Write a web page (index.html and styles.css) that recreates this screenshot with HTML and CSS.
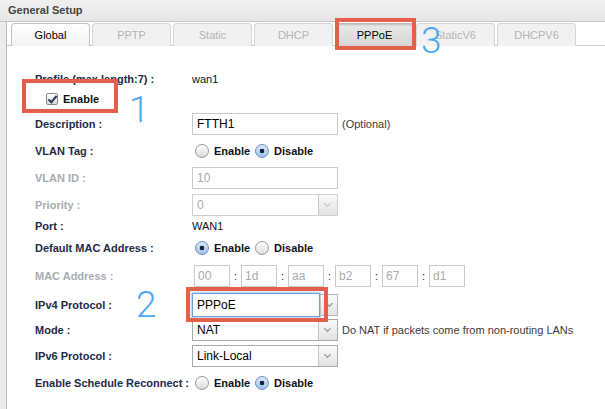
FILE: index.html
```html
<!DOCTYPE html>
<html>
<head>
    <meta charset="UTF-8">
    <title>General Setup</title>
    <link rel="stylesheet" href="styles.css">
</head>
<body>
    <div class="setup-title">General Setup</div>
    <div class="panel">
        <ul class="tabs">
            <li class="tab active">Global</li>
            <li class="tab">PPTP</li>
            <li class="tab">Static</li>
            <li class="tab">DHCP</li>
            <li class="tab pressed">PPPoE</li>
            <li class="tab">StaticV6</li>
            <li class="tab">DHCPV6</li>
        </ul>

        <div class="form">
            <div class="row r-profile">
                <span class="label">Profile (max length:7) :</span>
                <span class="value">wan1</span>
            </div>
            <div class="row r-enable">
                <span class="checkbox checked"></span>
                <span class="opt-text">Enable</span>
            </div>
            <div class="row r-field">
                <span class="label">Description :</span>
                <input class="text" type="text" value="FTTH1">
                <span class="hint">(Optional)</span>
            </div>
            <div class="row r-radio">
                <span class="label">VLAN Tag :</span>
                <span class="radio"></span><span class="opt-text">Enable</span>
                <span class="radio checked"></span><span class="opt-text">Disable</span>
            </div>
            <div class="row r-field">
                <span class="label off">VLAN ID :</span>
                <input class="text off" type="text" value="10">
            </div>
            <div class="row r-select">
                <span class="label off">Priority :</span>
                <div class="select off"><span class="sel-value">0</span><span class="arrow"></span></div>
            </div>
            <div class="row r-select">
                <span class="label">Port :</span>
                <span class="value">WAN1</span>
            </div>
            <div class="row r-mac">
                <span class="label">Default MAC Address :</span>
                <span class="radio checked"></span><span class="opt-text">Enable</span>
                <span class="radio"></span><span class="opt-text">Disable</span>
            </div>
            <div class="row r-macaddr">
                <span class="label off">MAC Address :</span>
                <div class="mac">
                    <input class="text off byte" type="text" value="00"><span class="colon">:</span>
                    <input class="text off byte" type="text" value="1d"><span class="colon">:</span>
                    <input class="text off byte" type="text" value="aa"><span class="colon">:</span>
                    <input class="text off byte" type="text" value="b2"><span class="colon">:</span>
                    <input class="text off byte" type="text" value="67"><span class="colon">:</span>
                    <input class="text off byte" type="text" value="d1">
                </div>
            </div>
            <div class="row r-ipv4">
                <span class="label">IPv4 Protocol :</span>
                <div class="select combo"><span class="combo-input">PPPoE</span><span class="arrow"></span></div>
            </div>
            <div class="row r-mode">
                <span class="label">Mode :</span>
                <div class="select"><span class="sel-value">NAT</span><span class="arrow"></span></div>
                <span class="hint">Do NAT if packets come from non-routing LANs</span>
            </div>
            <div class="row r-ipv6">
                <span class="label">IPv6 Protocol :</span>
                <div class="select"><span class="sel-value">Link-Local</span><span class="arrow"></span></div>
            </div>
            <div class="row r-sched">
                <span class="label">Enable Schedule Reconnect :</span>
                <span class="radio"></span><span class="opt-text">Enable</span>
                <span class="radio checked"></span><span class="opt-text">Disable</span>
            </div>
        </div>
    </div>

    <!-- anotaciones -->
    <div class="mark mark-tab"></div>
    <div class="mark mark-enable"></div>
    <div class="mark mark-ipv4"></div>
    <div class="step step-1">1</div>
    <div class="step step-2">2</div>
    <div class="step step-3">3</div>
</body>
</html>
```

FILE: styles.css
```css
body, html {
    margin: 0;
    padding: 0;
    font-family: "Liberation Sans", Arial, sans-serif;
    font-size: 11px;
    background: #ececec;
}
.setup-title {
    height: 21px;
    line-height: 21px;
    padding-left: 8px;
    font-weight: bold;
    color: #454545;
    background: linear-gradient(#f0f0f0, #e6e6e6);
    border-bottom: 1px solid #c6c6c6;
}
.panel {
    margin-left: 6px;
    border-left: 1px solid #b9b9b9;
    background: #ffffff;
    height: 387px;
}

/* pestañas */
.tabs {
    display: flex;
    gap: 2px;
    margin: 0;
    padding: 0 0 0 4px;
    list-style: none;
    height: 23px;
    border-bottom: 1px solid #cbcbcb;
}
.tab {
    width: 77px;
    height: 22px;
    margin-top: 1px;
    line-height: 22px;
    text-align: center;
    color: #b3b3b3;
    background: #f1f1f1;
    border: 1px solid #d6d6d6;
    border-bottom: none;
    border-radius: 4px 4px 0 0;
}
.tab.active {
    color: #000;
    background: linear-gradient(#ffffff, #f3f3f3);
    border-color: #c2c2c2;
}
.tab.pressed {
    color: #000;
    background: linear-gradient(#e9e9e9, #d6d6d6);
    border-color: #b8b8b8;
    box-shadow: inset 0 1px 2px rgba(0, 0, 0, 0.2);
}

/* formulario */
.form {
    padding: 23px 0 0 28px;
}
.row {
    display: flex;
    align-items: center;
}
.r-profile { height: 20px; }
.r-enable { height: 19px; padding-left: 4px; }
.r-field { height: 32px; }
.r-radio { height: 22px; }
.r-select { height: 21px; }
.r-mac { height: 23px; }
.r-macaddr { height: 34px; }
.r-ipv4 { height: 23px; }
.r-mode { height: 28px; }
.r-ipv6 { height: 24px; }
.r-sched { height: 30px; }

.label {
    width: 157px;
    flex: none;
    font-weight: bold;
    color: #1e2b47;
}
.label.off {
    color: #a9abb2;
}
.value {
    font-size: 11px;
    color: #111;
}
.hint {
    margin-left: 4px;
    color: #3f3a35;
}
.opt-text {
    font-weight: bold;
    color: #111;
    margin-left: 5px;
    margin-right: 5px;
}

input.text {
    box-sizing: border-box;
    width: 146px;
    height: 22px;
    margin: 0;
    padding: 0 4px;
    border: 1px solid #c9c9c9;
    font-family: inherit;
    font-size: 12px;
    color: #000;
    background: #fff;
    outline: none;
}
input.text.off {
    color: #aaaaaa;
}
.mac {
    display: flex;
    align-items: center;
    margin-left: 2px;
}
input.byte {
    width: 36px;
    padding: 0 3px;
}
.colon {
    width: 11px;
    text-align: center;
    color: #222;
}

/* checkbox y radios */
.checkbox {
    box-sizing: border-box;
    width: 12px;
    height: 12px;
    margin-left: 7px;
    border: 1px solid #8a8a8a;
    border-radius: 2px;
    background: linear-gradient(#fdfdfd, #d9d9d9);
    position: relative;
}
.checkbox.checked::after {
    content: "";
    position: absolute;
    left: 3px;
    top: 0px;
    width: 3px;
    height: 7px;
    border-right: 2px solid #30385a;
    border-bottom: 2px solid #30385a;
    transform: rotate(40deg);
}
.radio {
    box-sizing: border-box;
    width: 14px;
    height: 14px;
    margin-left: 3px;
    border: 1px solid #9a9a9a;
    border-radius: 50%;
    background: linear-gradient(#ffffff, #dcdcdc);
    flex: none;
}
.radio + .opt-text + .radio {
    margin-left: 0;
}
.radio.checked {
    border-color: #6f8fb3;
    background: radial-gradient(circle, #1d2233 0 2px, transparent 2.6px),
                linear-gradient(#d9e9f8, #9cc3ea);
}

/* selects */
.select {
    box-sizing: border-box;
    display: flex;
    width: 146px;
    height: 22px;
    border: 1px solid #a9a9a9;
    background: #fff;
}
.sel-value {
    flex: 1;
    padding-left: 4px;
    line-height: 20px;
    font-size: 12px;
    color: #000;
}
.arrow {
    width: 18px;
    border-left: 1px solid #c4c4c4;
    background: linear-gradient(#fafafa, #e2e2e2);
    position: relative;
}
.arrow::after {
    content: "";
    position: absolute;
    left: 6px;
    top: 6px;
    width: 4px;
    height: 4px;
    border-right: 1.5px solid #8c8c8c;
    border-bottom: 1.5px solid #8c8c8c;
    transform: rotate(45deg);
}
.select.off {
    border-color: #cfcfcf;
}
.select.off .sel-value {
    color: #aaaaaa;
}
.select.off .arrow::after {
    border-color: #c4c4c4;
}
.select.combo {
    border-color: #b5b5b5;
    overflow: visible;
}
.combo-input {
    box-sizing: border-box;
    width: 128px;
    height: 24px;
    margin: -2px 0 0 -1px;
    padding-left: 4px;
    line-height: 22px;
    font-size: 12px;
    color: #000;
    background: #fff;
    border: 1px solid #6f9fd3;
    box-shadow: 0 0 2px 1px #a6c8ee;
    position: relative;
}
.select.combo .arrow {
    flex: 1;
}

/* anotaciones */
.mark {
    position: absolute;
    box-sizing: border-box;
    border: 4px solid #e5604c;
}
.mark-tab {
    left: 335px;
    top: 18px;
    width: 81px;
    height: 32px;
}
.mark-enable {
    left: 22px;
    top: 79px;
    width: 96px;
    height: 34px;
}
.mark-ipv4 {
    left: 186px;
    top: 287px;
    width: 142px;
    height: 35px;
}
.step {
    position: absolute;
    font-family: Roboto, "Liberation Sans", sans-serif;
    font-weight: 300;
    font-size: 37px;
    line-height: 36px;
    color: #4ea7f2;
}
.step-1 { left: 129px; top: 92px; }
.step-2 { left: 136px; top: 287px; }
.step-3 { left: 421px; top: 23px; }
```
